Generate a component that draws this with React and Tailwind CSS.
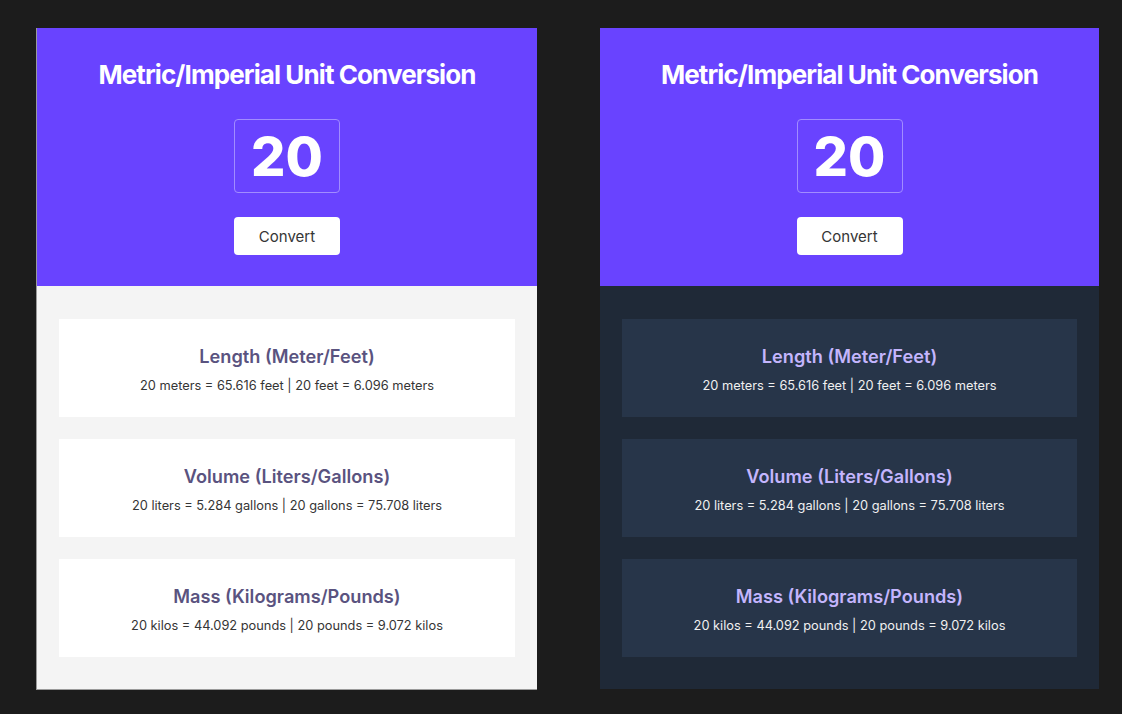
import { useState } from "react";

const conversions = [
  {
    title: "Length (Meter/Feet)",
    text: (n) =>
      `${n} meters = ${(n * 3.2808).toFixed(3)} feet | ${n} feet = ${(n * 0.3048).toFixed(3)} meters`,
  },
  {
    title: "Volume (Liters/Gallons)",
    text: (n) =>
      `${n} liters = ${(n * 0.2642).toFixed(3)} gallons | ${n} gallons = ${(n * 3.7854).toFixed(3)} liters`,
  },
  {
    title: "Mass (Kilograms/Pounds)",
    text: (n) =>
      `${n} kilos = ${(n * 2.2046).toFixed(3)} pounds | ${n} pounds = ${(n * 0.4536).toFixed(3)} kilos`,
  },
];

function Converter({ dark }) {
  const [value, setValue] = useState("20");
  const [num, setNum] = useState(20);

  return (
    <div
      className={
        dark
          ? "w-[499px] flex flex-col"
          : "w-[501px] flex flex-col border-l border-b border-[#9a9a9a]"
      }
    >
      <div className="bg-[#6943ff] h-[258px] flex flex-col items-center pt-[32px]">
        <h1 className="text-white text-[26px] leading-[30px] font-bold tracking-[-0.035em]">
          Metric/Imperial Unit Conversion
        </h1>
        <input
          value={value}
          onChange={(e) => setValue(e.target.value)}
          className="mt-[29px] w-[106px] h-[74px] rounded-[4px] border-[1.5px] border-[#a18cff] bg-transparent text-center text-white text-[54px] font-extrabold outline-none"
        />
        <button
          onClick={() => setNum(Number(value) || 0)}
          className="mt-[24px] w-[106px] h-[38px] pt-[2px] rounded-[4px] bg-white text-[15px] text-[#353535]"
        >
          Convert
        </button>
      </div>
      <div
        className={
          dark
            ? "bg-[#1f2937] flex-1 px-[22px] pt-[33px] pb-[32px] flex flex-col gap-[22px]"
            : "bg-[#f4f4f4] flex-1 px-[22px] pt-[33px] pb-[32px] flex flex-col gap-[22px]"
        }
      >
        {conversions.map((c) => (
          <div
            key={c.title}
            className={
              dark
                ? "bg-[#273549] h-[98px] flex flex-col items-center justify-center pt-[4px]"
                : "bg-white h-[98px] flex flex-col items-center justify-center pt-[4px]"
            }
          >
            <h2
              className={
                dark
                  ? "text-[18.2px] leading-[24px] font-semibold text-[#c4b5fd]"
                  : "text-[18.2px] leading-[24px] font-semibold text-[#5a537f]"
              }
            >
              {c.title}
            </h2>
            <p
              className={
                dark
                  ? "mt-[8px] text-[12.8px] leading-[20px] text-[#f0f0f0]"
                  : "mt-[8px] text-[12.8px] leading-[20px] text-[#353535]"
              }
            >
              {c.text(num)}
            </p>
          </div>
        ))}
      </div>
    </div>
  );
}

export default function App() {
  return (
    <main
      className="min-h-screen bg-[#1c1c1c] pt-[28px] pl-[36px] flex gap-[63px] items-start"
      style={{ fontFamily: "Inter, sans-serif" }}
    >
      <Converter />
      <Converter dark />
    </main>
  );
}
